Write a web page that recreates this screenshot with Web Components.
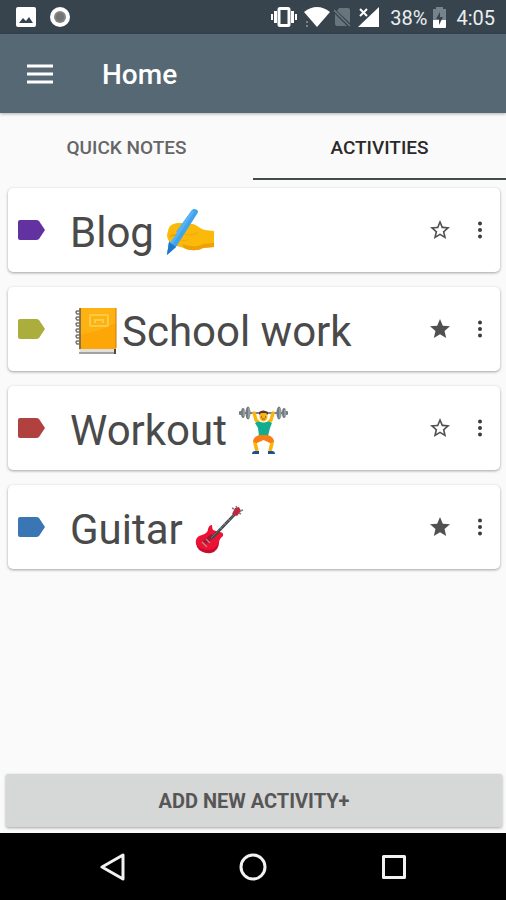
<!DOCTYPE html>
<html lang="en">
<head>
<meta charset="utf-8">
<meta name="viewport" content="width=device-width, initial-scale=1">
<title>Home</title>
<style>
  :root {
    --c-status: #37444d;
    --c-primary: #566874;
    --c-page: #fafafa;
    --c-text: #4a4a4a;
  }

  body {
    margin: 0;
    background: var(--c-page);
    color: var(--c-text);
    font-family: Roboto, "Liberation Sans", sans-serif;
  }
</style>
</head>
<body>
<app-screen>
  <status-bar slot="top" battery="38%" time="4:05"></status-bar>
  <app-bar slot="top">Home</app-bar>
  <tab-bar slot="top" tabs="Quick notes,Activities" selected="1"></tab-bar>

  <activity-card name="Blog" color="#6233a0">Blog <emoji-icon name="writing"></emoji-icon></activity-card>
  <activity-card name="School work" color="#abad3c" starred><emoji-icon name="notebook"></emoji-icon>School work</activity-card>
  <activity-card name="Workout" color="#b0413e">Workout <emoji-icon name="lifter"></emoji-icon></activity-card>
  <activity-card name="Guitar" color="#3a76b4" starred>Guitar <emoji-icon name="guitar"></emoji-icon></activity-card>

  <add-button slot="bottom">Add new activity+</add-button>
  <nav-bar slot="bottom"></nav-bar>
</app-screen>

<script>
const EMOJI = {
  writing: `
    <path d="M4 25 C5 19 9 17 16 17 L29 18 C33 19 36 23 41 24 L50 25 V41 L39 42 C34 45 25 45 20 42 L9 39 Q4 37 5 33 Q2 30 4 25Z" fill="#fbb90b"/>
    <path d="M20 42 C26 45 34 45 39 42 L50 41 V37 L39 38 C32 42 25 40 18 38Z" fill="#eea006"/>
    <path d="M20 28 Q27 30 34 27 M17 34 Q22 36 24 33" fill="none" stroke="#f5ac0a" stroke-width="1.2"/>
    <path d="M28 4 Q30 2 33 4 Q35 5 33 8 L12 41 L3 49 L5 36Z" fill="#3fa4ec"/>
    <path d="M28 4 L30 6 L8 39 L3 49 L5 36Z" fill="#58b2f2"/>
    <path d="M5 36 L12 41 L3 49Z" fill="#1b78cc"/>
    <path d="M4 27 Q8 23 13 26 L8 34 L6 36 Q2 33 4 27Z" fill="#fbb90b"/>
    <path d="M6 31 Q9 28 12 29" fill="none" stroke="#ee9d06" stroke-width="1.3"/>`,
  notebook: `
    <path d="M9 42 H46 V49 H10 Q8 46 9 42Z" fill="#eee"/>
    <path d="M9 44 H45 M10 46 H45" stroke="#d0d0d0"/>
    <path d="M9 48 H45" stroke="#888" stroke-width="1.6"/>
    <path d="M44 43 H46 V49 H44Z" fill="#4a4a4a"/>
    <path d="M10 3 H46 V44 H9Z" fill="#fca607"/>
    <path d="M10 3 H46 V18 L30 25 L10 30Z" fill="#fdb113"/>
    <path d="M10 3 V44" stroke="#7a6331" stroke-width="1.6"/>
    <path d="M46 3 V43" stroke="#ca7a06"/>
    <rect x="20" y="10" width="18" height="11" rx="1" fill="none" stroke="#ffcb45" stroke-width="2"/>
    <path d="M25 18 V15 H33 V18" fill="none" stroke="#ffcb45" stroke-width="2"/>
    <g fill="none" stroke="#747474" stroke-width="1.5">
      <path d="M11 9 H7 Q5 7 7 6 H10"/><path d="M11 15 H7 Q5 13 7 12 H10"/>
      <path d="M11 21 H7 Q5 19 7 18 H10"/><path d="M11 27 H7 Q5 25 7 24 H10"/>
      <path d="M11 33 H7 Q5 31 7 30 H10"/><path d="M11 39 H7 Q5 37 7 36 H10"/>
    </g>`,
  lifter: `
    <path d="M3 9 H50" stroke="#505b60" stroke-width="1.4"/>
    <g fill="#727d82">
      <ellipse cx="6" cy="9" rx="2" ry="5"/><ellipse cx="11" cy="9" rx="2.500" ry="6.500"/>
      <ellipse cx="42" cy="9" rx="2.500" ry="6.500"/><ellipse cx="47" cy="9" rx="2" ry="5"/>
      <rect x="2" y="7" width="3" height="4" rx="1"/><rect x="48" y="7" width="3" height="4" rx="1"/>
    </g>
    <path d="M7 6 V12 M12 4 V14 M43 4 V14 M48 6 V12" stroke="#b4bbbe"/>
    <path d="M17 9 L19 16 L23 20 M36 9 L34 16 L30 20" fill="none" stroke="#fbb50a" stroke-width="3.4" stroke-linecap="round" stroke-linejoin="round"/>
    <ellipse cx="26.500" cy="12.500" rx="4" ry="5" fill="#f9b20f"/>
    <path d="M22 11 V8 Q26 5 31 8 V11 L29 9 H24Z" fill="#543930"/>
    <path d="M24 13 H25 M28 13 H29" stroke="#543930"/>
    <path d="M25 15 H28" stroke="#a45b12"/>
    <path d="M18 19 Q21 17 24 18 Q26.500 19 29 18 Q32 17 35 19 L33 24 L31 32 H22 L21 24Z" fill="#12ad91"/>
    <path d="M21 35 L18 39 L20 47 M32 35 L35 39 L33 47" fill="none" stroke="#fbb50a" stroke-width="3.600" stroke-linejoin="round"/>
    <path d="M22 31 H31 Q37 33 37 38 L33 39 L26.500 36 L20 39 L16 38 Q16 33 22 31Z" fill="#f87d13"/>
    <path d="M15 50 Q15 47 18 47 H22 V50Z M31 47 H35 Q38 47 38 50 H31Z" fill="#1c5094"/>`,
  guitar: `
    <path d="M3 37 Q4 33 9 32 Q15 30 15 26 Q16 22 19 22 Q19 25 20 27 L26 29 Q31 29 30 33 Q26 36 26 40 Q24 49 16 49 Q8 49 5 44 Q2 41 3 37Z" fill="#ec1235"/>
    <path d="M3 39 Q5 47 16 47 Q24 46 26 38 Q26 48 18 50 Q8 51 4 44Z" fill="#c90b2c"/>
    <path d="M10 38 L18 31 L21 34 L16 39 L13 41Z" fill="#a3182f"/>
    <path d="M9 39 L14 44 M13 36 L17 40" stroke="#b88a92" stroke-width="1.2"/>
    <path d="M17 35 L41 10 L43 12 L20 36Z" fill="#40484c"/>
    <path d="M18 35 L42 11" stroke="#828a8d" stroke-width=".6"/>
    <path d="M27 24 L29 26 M31 20 L33 22 M35 16 L37 18" stroke="#8e999e" stroke-width=".6"/>
    <path d="M39 11 L42 5 L46 4 L48 8 L44 13Z" fill="#c2283c"/>
    <path d="M41 6 L39 5 M44 5 L43 3 M47 8 L50 7 M46 10 L48 11" stroke="#758087" stroke-width="1.600"/>`
};

class EmojiIcon extends HTMLElement {
  constructor() {
    super();
    this.attachShadow({ mode: "open" });
  }

  connectedCallback() {
    this.shadowRoot.innerHTML = `
      <style>
        :host { display: inline-block; width: 52px; height: 52px; vertical-align: -11px; }
        svg { display: block; width: 100%; height: 100%; }
      </style>
      <svg viewBox="0 0 52 52" aria-hidden="true">${EMOJI[this.getAttribute("name")]}</svg>
    `;
  }
}

class AppScreen extends HTMLElement {
  constructor() {
    super();
    this.attachShadow({ mode: "open" }).innerHTML = `
      <style>
        :host { display: flex; flex-direction: column; min-height: 100vh; }
        main {
          flex: 1;
          display: flex;
          flex-direction: column;
          gap: 15px;
          padding: 8px 6px 8px 8px;
        }
      </style>
      <header><slot name="top"></slot></header>
      <main><slot></slot></main>
      <footer><slot name="bottom"></slot></footer>
    `;
  }
}

class StatusBar extends HTMLElement {
  constructor() {
    super();
    this.attachShadow({ mode: "open" });
  }

  connectedCallback() {
    this.shadowRoot.innerHTML = `
      <style>
        :host {
          display: flex;
          justify-content: space-between;
          height: 34px;
          padding: 0 11px 0 16px;
          background: var(--c-status);
          color: #e9eef0;
          font-size: 20px;
        }
        div { display: flex; align-items: center; }
        .left { gap: 14px; }
        .wifi { margin-left: 7px; }
        .sim { margin-left: 4px; }
        .signal { margin: 0 11px 0 7px; }
        .battery { margin: 0 9px 0 5px; }
        span { line-height: 24px; padding-top: 2px; }
      </style>
      <div class="left">
        <svg width="20" height="20" viewBox="0 0 20 20" aria-hidden="true">
          <path fill="#fff" fill-rule="evenodd" d="M2 0H18Q20 0 20 2V18Q20 20 18 20H2Q0 20 0 18V2Q0 0 2 0ZM3 16H17L13 10L10 14L7 11Z"/>
        </svg>
        <svg width="20" height="20" viewBox="0 0 20 20" aria-hidden="true">
          <circle cx="10" cy="10" r="10" fill="#fff"/><circle cx="10" cy="10" r="6" fill="#858585"/>
          <circle cx="10" cy="10" r="4" fill="#747474"/>
        </svg>
      </div>
      <div>
        <svg width="26" height="20" viewBox="0 0 26 20" aria-hidden="true">
          <rect x="8" y="1.500" width="10" height="17" rx="1" fill="none" stroke="#fff" stroke-width="3"/>
          <path d="M4.500 4V16M21.500 4V16" stroke="#fff" stroke-width="3"/>
          <path d="M1 7V13M25 7V13" stroke="#fff" stroke-width="2"/>
        </svg>
        <svg class="wifi" width="26" height="20" viewBox="0 0 26 20" aria-hidden="true">
          <path d="M0 5Q13-5 26 5L13 20Z" fill="#fff"/>
          <path d="M3 14V16M3 18V20" stroke="#76838a" stroke-width="2"/>
        </svg>
        <svg class="sim" width="17" height="20" viewBox="0 0 17 20" aria-hidden="true">
          <path d="M5 1H14Q16 1 16 3V16L3 4ZM1 7L13 19H3Q1 19 1 17Z" fill="#69757c"/>
          <path d="M0 3L16 19" stroke="#69757c" stroke-width="1.600"/>
        </svg>
        <svg class="signal" width="21" height="20" viewBox="0 0 21 20" aria-hidden="true">
          <path d="M21 0V20H0Z" fill="#fff"/>
          <path d="M1 1L9 9M9 1L1 9" stroke="var(--c-status)" stroke-width="5"/>
          <path d="M2 2L9 9M9 2L2 9" stroke="#fff" stroke-width="2"/>
        </svg>
        <span>${this.getAttribute("battery")}</span>
        <svg class="battery" width="15" height="21" viewBox="0 0 15 21" aria-hidden="true">
          <path d="M1 2H4V0H11V2H14V13H1Z" fill="#77838a"/>
          <path d="M1 13H14V20Q14 21 13 21H2Q1 21 1 20Z" fill="#fff"/>
          <path d="M8 5L4 12H7V18L11 10H8Z" fill="var(--c-status)"/>
        </svg>
        <span>${this.getAttribute("time")}</span>
      </div>
    `;
  }
}

class AppBar extends HTMLElement {
  constructor() {
    super();
    this.attachShadow({ mode: "open" }).innerHTML = `
      <style>
        :host {
          position: relative;
          display: flex;
          align-items: center;
          height: 79px;
          background: var(--c-primary);
          box-shadow: 0 1px 3px rgba(0, 0, 0, 0.3);
          color: #fff;
        }
        button { width: 80px; height: 79px; padding: 0; border: 0; background: none; cursor: pointer; }
        svg { display: block; margin: auto; }
        h1 { margin: 0; padding: 2px 0 0 22px; font-size: 28px; line-height: 32px; font-weight: 500; }
      </style>
      <button type="button" aria-label="Menu">
        <svg width="28" height="20" viewBox="0 0 28 20"><path d="M1 2H27M1 10H27M1 18H27" stroke="#fff" stroke-width="3"/></svg>
      </button>
      <h1><slot></slot></h1>
    `;
  }
}

class TabBar extends HTMLElement {
  constructor() {
    super();
    this.attachShadow({ mode: "open" });
  }

  connectedCallback() {
    this.render();
  }

  render() {
    const selected = Number(this.getAttribute("selected"));
    const tabs = this.getAttribute("tabs").split(",");

    this.shadowRoot.innerHTML = `
      <style>
        :host { display: block; }
        div { display: flex; }
        button {
          flex: 1;
          height: 67px;
          padding: 4px 0 0;
          border: 0;
          border-bottom: 2px solid transparent;
          background: none;
          color: #666;
          font: 500 19px/24px Roboto, sans-serif;
          text-transform: uppercase;
          cursor: pointer;
        }
        button[aria-selected="true"] { color: #2a2a2a; border-color: #454a4d; }
      </style>
      <div role="tablist">
        ${tabs.map((tab, i) => `<button type="button" role="tab" aria-selected="${i === selected}">${tab}</button>`).join("")}
      </div>
    `;

    this.shadowRoot.querySelectorAll("button").forEach((button, i) => {
      button.addEventListener("click", () => {
        this.setAttribute("selected", i);
        this.render();
      });
    });
  }
}

class ActivityCard extends HTMLElement {
  constructor() {
    super();
    this.attachShadow({ mode: "open" });
  }

  static get observedAttributes() {
    return ["starred"];
  }

  attributeChangedCallback() {
    this.render();
  }

  connectedCallback() {
    this.render();
  }

  render() {
    const starred = this.hasAttribute("starred");
    const name = this.getAttribute("name");

    this.shadowRoot.innerHTML = `
      <style>
        :host {
          display: flex;
          align-items: center;
          min-height: 84px;
          border-radius: 5px;
          background: #fff;
          box-shadow: 0 1px 3px rgba(0, 0, 0, 0.36);
        }
        .tag { flex: none; margin: 0 25px 0 10px; }
        h2 {
          flex: 1;
          margin: 0;
          padding-top: 4px;
          font-size: 42px;
          line-height: 52px;
          font-weight: 400;
        }
        button { width: 40px; height: 48px; padding: 0; border: 0; background: none; cursor: pointer; }
        button svg { display: block; margin: auto; }
      </style>
      <svg class="tag" width="27" height="20" viewBox="0 0 27 20" aria-hidden="true">
        <path d="M2 0H18Q20 0 21 1L27 10L21 19Q20 20 18 20H2Q0 20 0 18V2Q0 0 2 0Z" fill="${this.getAttribute("color")}"/>
      </svg>
      <h2><slot></slot></h2>
      <button class="star" type="button" aria-label="Star ${name}" aria-pressed="${starred}">
        <svg width="20" height="20" viewBox="2 2 20 20">
          <path fill="#505050" d="${starred
            ? "M12 17.270L18.180 21l-1.640-7.030L22 9.240l-7.190-.61L12 2 9.190 8.630 2 9.240l5.460 4.730L5.820 21z"
            : "M22 9.240l-7.190-.62L12 2 9.190 8.630 2 9.240l5.460 4.730L5.820 21 12 17.270 18.180 21l-1.630-7.030L22 9.240zM12 15.400l-3.760 2.270 1-4.280-3.320-2.880 4.380-.38L12 6.100l1.710 4.040 4.380.38-3.320 2.880 1 4.280L12 15.400z"}"/>
        </svg>
      </button>
      <button type="button" aria-label="Options for ${name}">
        <svg width="6" height="18" viewBox="0 0 6 18" fill="#3c3c3c">
          <circle cx="3" cy="2.500" r="2"/><circle cx="3" cy="9" r="2"/><circle cx="3" cy="15.500" r="2"/>
        </svg>
      </button>
    `;

    this.shadowRoot.querySelector(".star").addEventListener("click", () => this.toggleAttribute("starred"));
  }
}

class AddButton extends HTMLElement {
  constructor() {
    super();
    this.attachShadow({ mode: "open" }).innerHTML = `
      <style>
        :host { display: block; padding: 0 4px 6px 6px; }
        button {
          width: 100%;
          height: 53px;
          border: 0;
          border-radius: 2px;
          background: #d6d7d7;
          box-shadow: 0 1px 3px rgba(0, 0, 0, 0.35);
          color: #565656;
          font: 700 20px/24px Roboto, sans-serif;
          text-transform: uppercase;
          cursor: pointer;
        }
      </style>
      <button type="button"><slot></slot></button>
    `;
  }
}

class NavBar extends HTMLElement {
  constructor() {
    super();
    this.attachShadow({ mode: "open" }).innerHTML = `
      <style>
        :host { display: block; background: #000; }
        nav { display: flex; justify-content: center; }
        button { flex: 0 1 141px; height: 67px; padding: 0; border: 0; background: none; cursor: pointer; }
        svg { display: block; margin: auto; fill: none; stroke: #f2f2f2; stroke-width: 3; stroke-linejoin: round; }
      </style>
      <nav aria-label="System">
        <button type="button" aria-label="Back"><svg width="28" height="28" viewBox="0 0 28 28"><path d="M25 2V26L4 14Z"/></svg></button>
        <button type="button" aria-label="Home"><svg width="28" height="28" viewBox="0 0 28 28"><circle cx="14" cy="14" r="12"/></svg></button>
        <button type="button" aria-label="Recent apps"><svg width="28" height="28" viewBox="0 0 28 28"><rect x="3.500" y="3.500" width="21" height="21"/></svg></button>
      </nav>
    `;
  }
}

customElements.define("emoji-icon", EmojiIcon);
customElements.define("app-screen", AppScreen);
customElements.define("status-bar", StatusBar);
customElements.define("app-bar", AppBar);
customElements.define("tab-bar", TabBar);
customElements.define("activity-card", ActivityCard);
customElements.define("add-button", AddButton);
customElements.define("nav-bar", NavBar);
</script>
</body>
</html>
